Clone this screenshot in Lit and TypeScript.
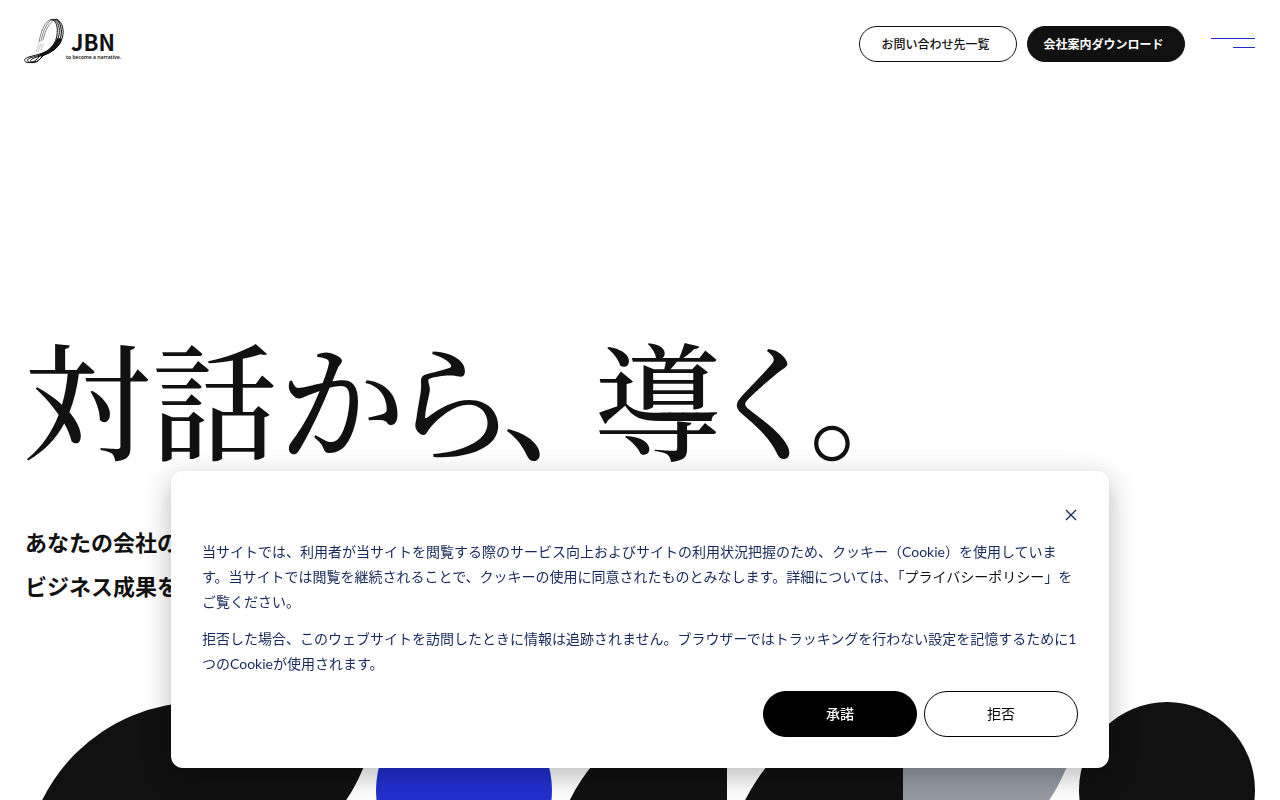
import { LitElement, html, css, svg } from "lit";
import { customElement, state } from "lit/decorators.js";

@customElement("site-logo")
class SiteLogo extends LitElement {
  static styles = css`
    :host { display: block; }
    .logo { display: grid; grid-template-columns: 40px auto; column-gap: 2px; color: #111; text-decoration: none; }
    .mark { display: block; width: 40px; height: 46px; }
    .words { display: flex; flex-direction: column; padding-top: 12px; }
    .name { font: 700 22px/23px "Noto Sans CJK JP", sans-serif; padding-left: 5px; }
    .tag { font: 600 5px/8px "Noto Sans", sans-serif; white-space: nowrap; }
  `;
  render() {
    return html`<a class="logo" href="#" aria-label="JBN">
      <svg class="mark" viewBox="0 0 40 46" fill="none" stroke="#111" stroke-linecap="round" aria-hidden="true">
        ${svg`
        <path d="M15 24C17 13 21 3 27 1.500H33" stroke-width=".5"/>
        <path d="M17 23C19 13 23 4 28 1.500" stroke-width=".5"/>
        <path d="M19 22C21 13 25 4 31 1.500" stroke-width=".5"/>
        <path d="M12 34L15 26M14 34L17 26M17 32L19 26" stroke-width=".4" opacity=".6"/>
        <path d="M27 1.500C33 2 34 10 33 17C32 25 27 31 20 35" stroke-width="1"/>
        <path d="M29 1.500C35 3 36 11 35 17C33 26 28 32 19 36" stroke-width="1"/>
        <path d="M31 1.300C37 3 38 12 37 18C35 27 29 33 19 37" stroke-width="1.1"/>
        <path d="M33 1.300C39 4 40 13 38.500 19C36 29 29 34 18 38" stroke-width="1"/>
        <path d="M33 20C30 28 24 33 15 36.500L17 38.500C28 35 35 30 38 21Z" fill="#111" stroke="none"/>
        <path d="M21 34C13 38 3 38 .700 41.500C-.500 45 8 46 12 42C14 40 16 37 20 36" stroke-width="1"/>
        <path d="M19 36C12 39 5 39 3.500 42C3 45 12 46 15 42L19 37.500" stroke-width="1"/>
        <path d="M18 37C12 40 8 40 6.500 42.500C6 45 13 45 17 40L20 37" stroke-width="1"/>`}
      </svg>
      <span class="words"><span class="name">JBN</span><span class="tag">to become a narrative.</span></span>
    </a>`;
  }
}

@customElement("cookie-banner")
class CookieBanner extends LitElement {
  @state() open = true;
  static styles = css`
    :host { display: block; }
    .banner {
      position: fixed; left: 0; right: 0; bottom: 32px; margin: 0 auto; box-sizing: border-box;
      width: calc(100% - 64px); max-width: 938px; padding: 32px 31px 31px; border-radius: 12px;
      background: #fff; color: #15295a; box-shadow: 0 8px 28px rgba(0, 0, 0, .28);
      font: 14px/25px Lato, "Noto Sans CJK JP", sans-serif;
    }
    .top { display: flex; justify-content: flex-end; }
    .close { display: flex; width: 14px; height: 24px; padding: 0; border: 0; background: none; color: inherit; align-items: center; justify-content: center; cursor: pointer; }
    .text { margin: 12px 0; }
    .policy { color: #111; text-decoration: none; }
    .actions { display: flex; flex-wrap: wrap; justify-content: flex-end; gap: 7px; margin-top: 15px; }
    .button { width: 154px; height: 46px; border: 1px solid #000; border-radius: 23px; background: #fff; color: #000; font: inherit; line-height: 24px; cursor: pointer; }
    .primary { background: #000; color: #fff; font-weight: 500; }
  `;
  render() {
    if (!this.open) return html``;
    const close = () => (this.open = false);
    return html`<section class="banner" role="dialog" aria-label="Cookie">
      <div class="top"><button class="close" aria-label="閉じる" @click=${close}>
        <svg width="12" height="12" viewBox="0 0 12 12" fill="none" stroke="currentColor" stroke-width="1.3"><path d="M1 1L11 11M11 1L1 11"/></svg>
      </button></div>
      <p class="text">当サイトでは、利用者が当サイトを閲覧する際のサービス向上およびサイトの利用状況把握のため、クッキー（Cookie）を使用しています。当サイトでは閲覧を継続されることで、クッキーの使用に同意されたものとみなします。詳細については、「<a class="policy" href="#">プライバシーポリシー</a>」をご覧ください。</p>
      <p class="text">拒否した場合、このウェブサイトを訪問したときに情報は追跡されません。ブラウザーではトラッキングを行わない設定を記憶するために1つのCookieが使用されます。</p>
      <div class="actions">
        <button class="button primary" @click=${close}>承諾</button>
        <button class="button" @click=${close}>拒否</button>
      </div>
    </section>`;
  }
}

@customElement("app-root")
class AppRoot extends LitElement {
  static styles = css`
    :host { display: block; height: 100vh; overflow: hidden; background: #fff; color: #111; font-family: "Noto Sans CJK JP", sans-serif; }
    .header { display: flex; justify-content: space-between; align-items: flex-start; padding: 18px 25px 0 24px; }
    .nav { display: flex; align-items: center; gap: 10px; padding-top: 8px; }
    .pill { box-sizing: border-box; width: 158px; height: 36px; padding-right: 5px; border: 1px solid #111; border-radius: 18px; display: flex; align-items: center; justify-content: center; color: #111; font-size: 12px; line-height: 18px; font-weight: 500; text-decoration: none; }
    .solid { background: #111; color: #fff; font-weight: 700; }
    .menu { display: flex; flex-direction: column; align-items: flex-end; gap: 8px; width: 44px; margin-left: 16px; padding: 0 0 2px; border: 0; background: none; cursor: pointer; }
    .bar { width: 44px; height: 1px; background: #2230d0; }
    .short { width: 22px; }
    .hero { padding: 252px 24px 0; }
    .title { display: flex; gap: 26px; margin: 0; font: 500 127px/160px "Noto Serif CJK JP", "Noto Sans CJK JP", serif; font-feature-settings: "palt"; white-space: nowrap; }
    .lead { margin: 43px 0 0; padding-left: 1px; font-size: 22px; line-height: 44px; font-weight: 700; }
    .shapes { display: grid; grid-template-columns: repeat(7, 1fr); padding: 0 25px 0 24px; margin-top: 95px; }
    .shape { aspect-ratio: 1; background: #111; }
    .rise { border-top-left-radius: 100%; }
    .fall { border-bottom-right-radius: 100%; }
    .circle { border-radius: 50%; }
    .blue { background: #2230d0; }
    .gray { background: #959aa5; }
  `;
  render() {
    return html`
      <header class="header">
        <site-logo></site-logo>
        <nav class="nav">
          <a class="pill" href="#">お問い合わせ先一覧</a>
          <a class="pill solid" href="#">会社案内ダウンロード</a>
          <button class="menu" aria-label="メニュー"><span class="bar"></span><span class="bar short"></span></button>
        </nav>
      </header>
      <main>
        <div class="hero">
          <h1 class="title"><span>対話から、</span><span>導く。</span></h1>
          <p class="lead">あなたの会社の<br>ビジネス成果を</p>
        </div>
        <div class="shapes">
          <div class="shape rise"></div><div class="shape fall"></div><div class="shape circle blue"></div>
          <div class="shape rise"></div><div class="shape rise"></div><div class="shape fall gray"></div><div class="shape circle"></div>
        </div>
      </main>
      <cookie-banner></cookie-banner>`;
  }
}
